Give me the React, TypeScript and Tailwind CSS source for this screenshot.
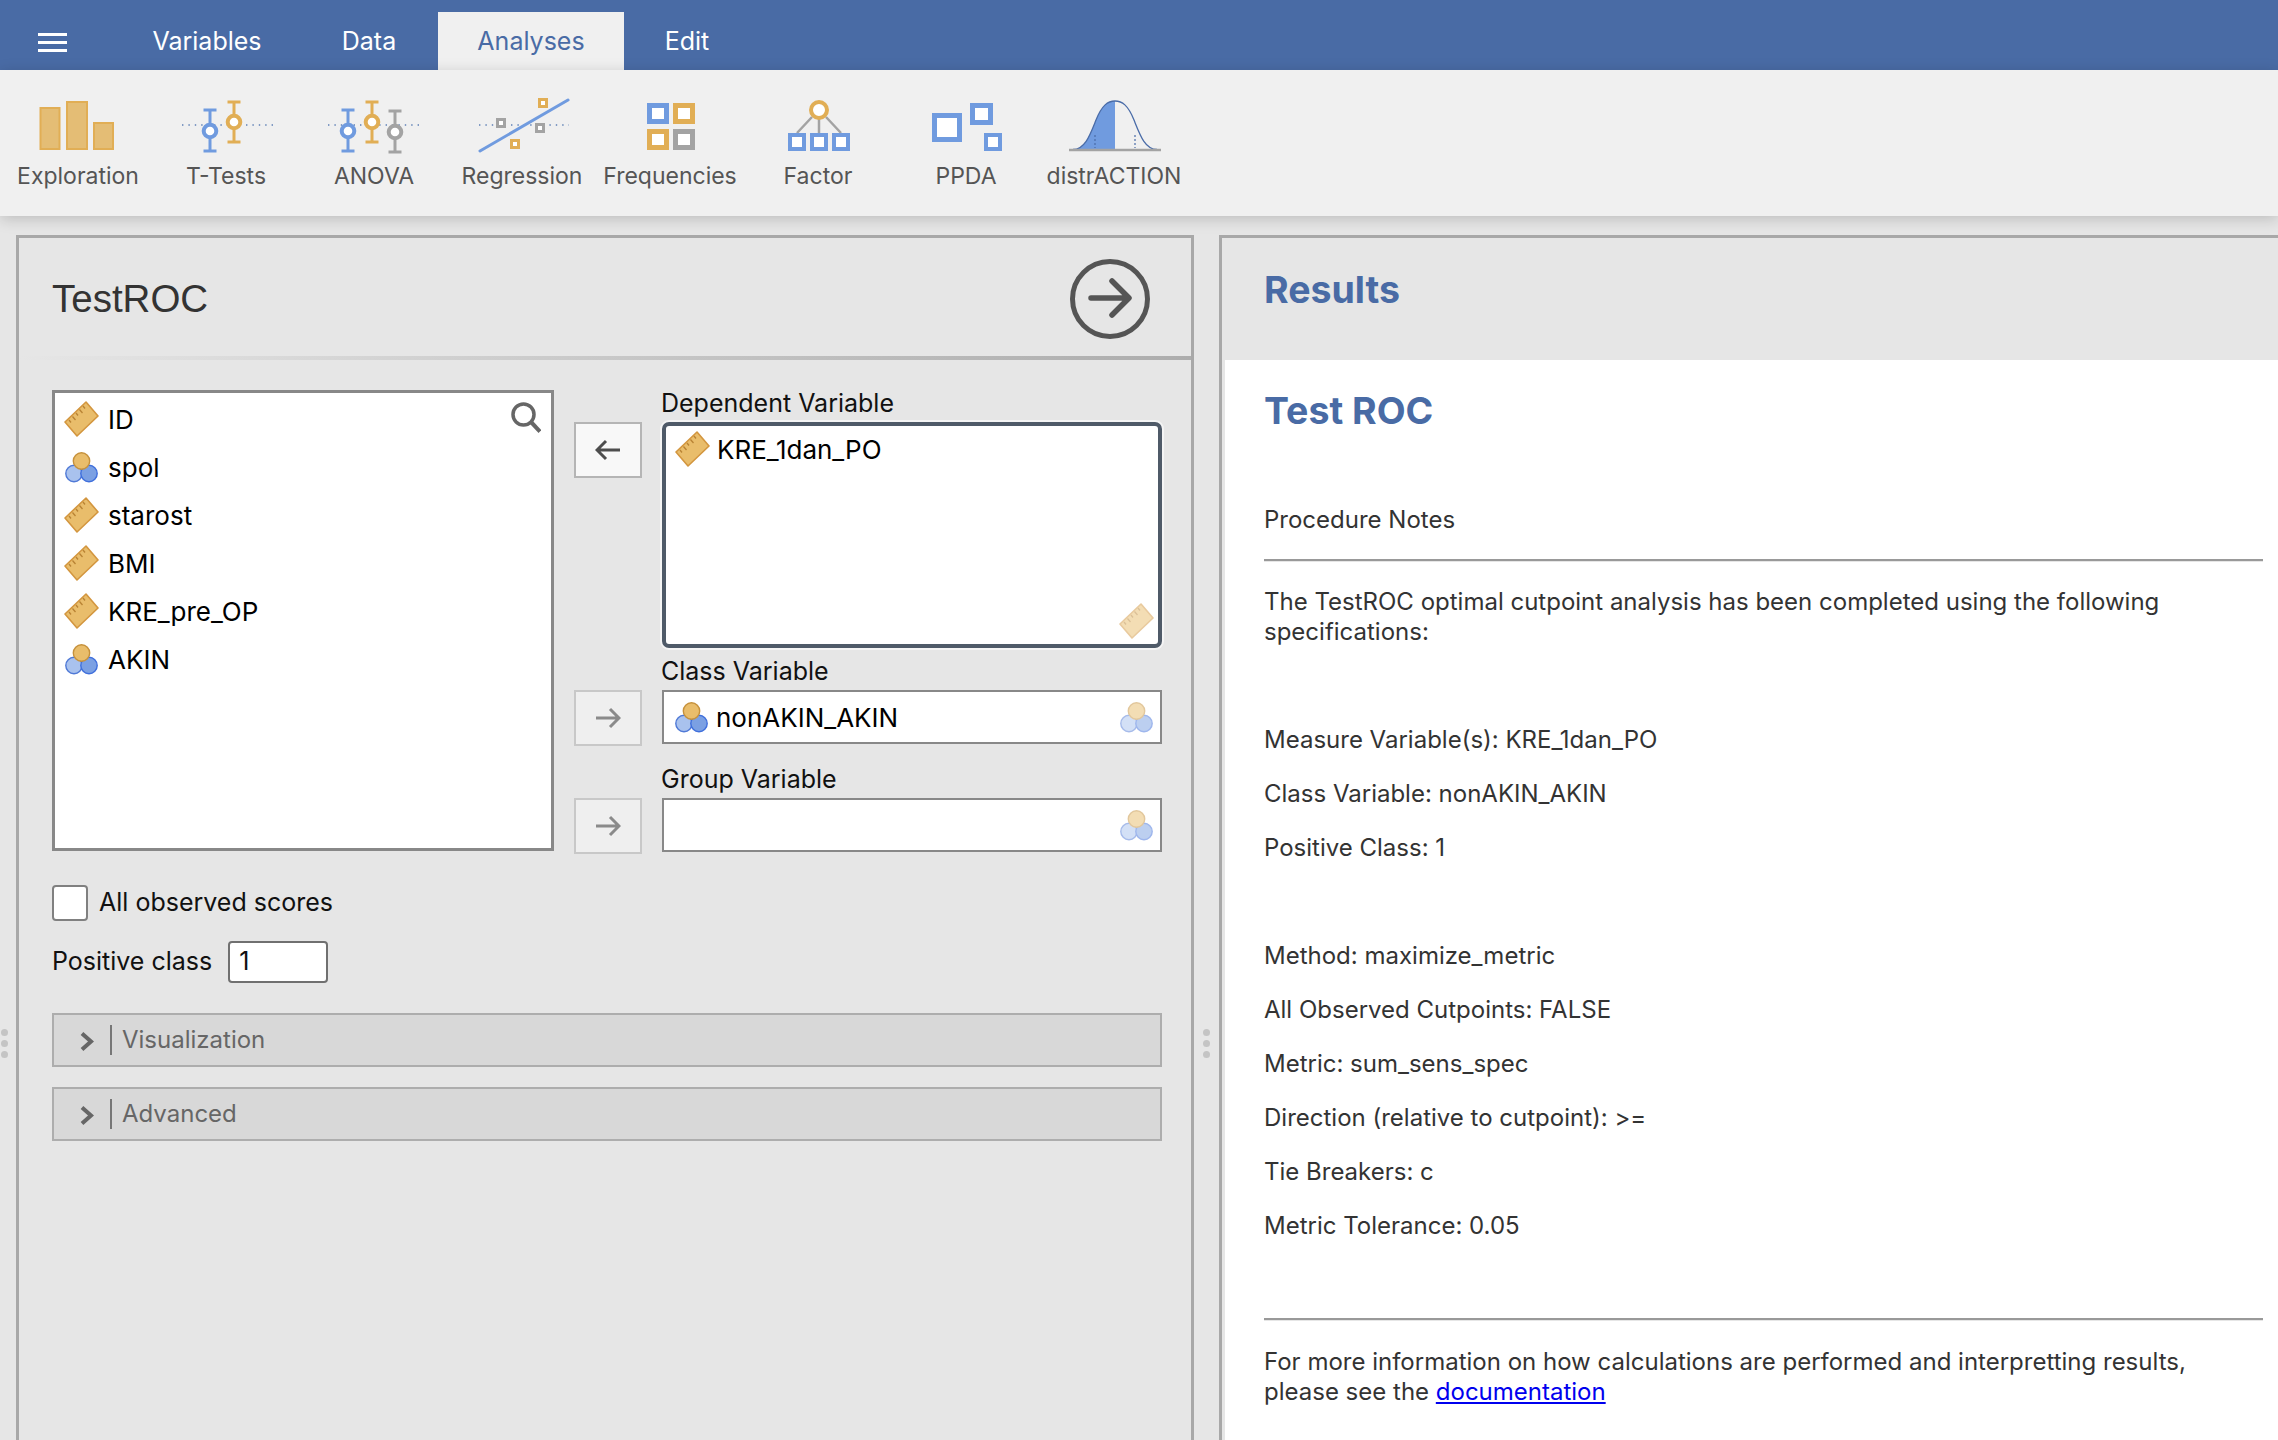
import type { ReactNode } from "react";

const ORANGE = "#e1ae55";
const BLUE = "#709bdf";
const GRAY = "#a3a3a3";

function RulerIcon({ faded = false }: { faded?: boolean }) {
  return (
    <svg width="35" height="36" viewBox="0 0 35 36" className={faded ? "opacity-50" : ""}>
      <path d="M22 1 L34 15 L13 35 L1 21 Z" fill="#e9bd6b" stroke="#d3963f" strokeWidth="1.6" strokeLinejoin="round" />
      <path
        d="M19 5 L21 7.5 M15.5 8.5 L18.5 12 M12 12 L14 14.5 M8.5 15.5 L11.5 19 M5 19 L7 21.5"
        stroke="#b98334"
        strokeWidth="1.3"
        fill="none"
      />
    </svg>
  );
}

function NominalIcon({ faded = false }: { faded?: boolean }) {
  return (
    <svg width="33" height="31" viewBox="0 0 33 31" className={faded ? "opacity-50" : ""}>
      <circle cx="9" cy="21.5" r="8.2" fill="#a9c2ee" stroke="#4f79d6" strokeWidth="1.4" />
      <circle cx="24" cy="21.5" r="8.2" fill="#7ba0e3" stroke="#3f6fdc" strokeWidth="1.4" />
      <circle cx="16.5" cy="9" r="8.2" fill="#e9bd6b" stroke="#c6913c" strokeWidth="1.4" />
    </svg>
  );
}

function ErrorBar({ x, top, bottom, cy, color }: { x: number; top: number; bottom: number; cy: number; color: string }) {
  return (
    <g stroke={color} fill="none">
      <path d={`M${x - 6.5} ${top} H${x + 6.5} M${x} ${top} V${bottom} M${x - 6.5} ${bottom} H${x + 6.5}`} strokeWidth="3" />
      <circle cx={x} cy={cy} r="6.3" fill="#fff" strokeWidth="4" />
    </g>
  );
}

function Box({ x, y, w, h, color, s = 5 }: { x: number; y: number; w: number; h: number; color: string; s?: number }) {
  return <rect x={x + s / 2} y={y + s / 2} width={w - s} height={h - s} fill="#fff" stroke={color} strokeWidth={s} />;
}

function Dots({ from, to }: { from: number; to: number }) {
  return <path d={`M${from} 30 H${to}`} stroke="#5d7fb5" strokeWidth="1.3" strokeDasharray="1.4 5" fill="none" />;
}

const tools: { label: string; icon: ReactNode }[] = [
  {
    label: "Exploration",
    icon: (
      <g fill="#e4bd75" stroke={ORANGE} strokeWidth="2">
        <rect x="36.5" y="13" width="19" height="41" />
        <rect x="63" y="7" width="20" height="47" />
        <rect x="90" y="28" width="19" height="26" />
      </g>
    ),
  },
  {
    label: "T-Tests",
    icon: (
      <>
        <Dots from={30} to={121} />
        <ErrorBar x={58} top={15} bottom={56} cy={36} color={BLUE} />
        <ErrorBar x={82} top={7} bottom={47} cy={27} color={ORANGE} />
      </>
    ),
  },
  {
    label: "ANOVA",
    icon: (
      <>
        <Dots from={28} to={119} />
        <ErrorBar x={48} top={15} bottom={56} cy={36} color={BLUE} />
        <ErrorBar x={72} top={7} bottom={47} cy={27} color={ORANGE} />
        <ErrorBar x={95} top={16} bottom={57} cy={37} color={GRAY} />
      </>
    ),
  },
  {
    label: "Regression",
    icon: (
      <>
        <Dots from={31} to={121} />
        <path d="M32 56 L120 5" stroke={BLUE} strokeWidth="3" strokeLinecap="round" />
        <Box x={90} y={3} w={10} h={10} color={ORANGE} s={3} />
        <Box x={48} y={23} w={10} h={10} color={GRAY} s={3} />
        <Box x={87} y={28} w={10} h={10} color={GRAY} s={3} />
        <Box x={62} y={44} w={10} h={10} color={ORANGE} s={3} />
      </>
    ),
  },
  {
    label: "Frequencies",
    icon: (
      <>
        <Box x={51} y={8} w={22} h={21} color={BLUE} />
        <Box x={77} y={8} w={22} h={21} color={ORANGE} />
        <Box x={51} y={34} w={22} h={21} color={ORANGE} />
        <Box x={77} y={34} w={22} h={21} color={GRAY} />
      </>
    ),
  },
  {
    label: "Factor",
    icon: (
      <>
        <path d="M68 22 L53 38 M75 24 V38 M82 22 L97 38" stroke={GRAY} strokeWidth="2.5" />
        <circle cx="75" cy="15" r="8" fill="#fff" stroke={ORANGE} strokeWidth="4" />
        <Box x={44} y={38} w={18} h={18} color={BLUE} s={4} />
        <Box x={66} y={38} w={18} h={18} color={BLUE} s={4} />
        <Box x={88} y={38} w={18} h={18} color={BLUE} s={4} />
      </>
    ),
  },
  {
    label: "PPDA",
    icon: (
      <>
        <Box x={40} y={18} w={30} h={29} color={BLUE} />
        <Box x={78} y={8} w={23} h={22} color={BLUE} />
        <Box x={92} y={38} w={18} h={18} color={BLUE} s={4} />
      </>
    ),
  },
  {
    label: "distrACTION",
    icon: (
      <>
        <path d="M33 54.5 C45 54.5 50 40 56 25 C62 10 68 6 75 6 L75 54.5 Z" fill={BLUE} />
        <path
          d="M33 54.5 C45 54.5 50 40 56 25 C62 10 68 6 75 6 C82 6 88 10 94 25 C100 40 105 54.5 117 54.5"
          fill="none"
          stroke="#4a6ca8"
          strokeWidth="1.3"
        />
        <path d="M55 40 V53 M95 40 V53" stroke="#4a6ca8" strokeWidth="1.2" strokeDasharray="2 2" />
        <path d="M29 55 H121" stroke={GRAY} strokeWidth="2.5" />
      </>
    ),
  },
];

function VariableRow({ name, kind }: { name: string; kind: "ruler" | "nominal" }) {
  return (
    <div className="flex h-[48px] items-center">
      <div className="flex w-[53px] shrink-0 justify-center">{kind === "ruler" ? <RulerIcon /> : <NominalIcon />}</div>
      <span className="text-[26px] text-black">{name}</span>
    </div>
  );
}

function ArrowButton({ dir, active = false }: { dir: "left" | "right"; active?: boolean }) {
  return (
    <div
      className={`flex h-[56px] w-[68px] shrink-0 items-center justify-center border-[2px] ${
        active ? "border-[#b5b5b5] bg-[#f8f8f8]" : "border-[#c8c8c8] bg-[#efefef]"
      }`}
    >
      <svg width="26" height="22" viewBox="0 0 26 22" fill="none">
        <path
          d={dir === "left" ? "M25 11 H2 M11 2 L2 11 L11 20" : "M1 11 H24 M15 2 L24 11 L15 20"}
          stroke={active ? "#4d4d4d" : "#8a8a8a"}
          strokeWidth="3"
        />
      </svg>
    </div>
  );
}

function SectionBar({ title }: { title: string }) {
  return (
    <div className="flex h-[54px] items-center border-[2.5px] border-[#adadad] bg-[#d8d8d8]">
      <div className="flex w-[56px] justify-center pl-[9px]">
        <svg width="15" height="21" viewBox="0 0 15 21" fill="none" className="mt-[4px]">
          <path d="M3 2.5 L12 10.5 L3 18.5" stroke="#666" strokeWidth="4" />
        </svg>
      </div>
      <div className="h-[30px] w-[2px] bg-[#777]" />
      <span className="ml-[10px] text-[24px] text-[#666]">{title}</span>
    </div>
  );
}

function Line({ children }: { children: ReactNode }) {
  return <p className="text-[24px] leading-[30px] text-[#333]">{children}</p>;
}

function Rule() {
  return <div className="h-[3px] border-b border-[#e6e6e6] bg-[#999]" />;
}

function GripDots() {
  return (
    <div className="flex flex-col gap-[4px]">
      <div className="h-[7px] w-[7px] rounded-full bg-[#c4c4c4]" />
      <div className="h-[7px] w-[7px] rounded-full bg-[#c4c4c4]" />
      <div className="h-[7px] w-[7px] rounded-full bg-[#c4c4c4]" />
    </div>
  );
}

export default function App() {
  return (
    <div className="flex h-[1440px] w-[2278px] flex-col overflow-hidden bg-[#e6e6e6] font-['Inter',sans-serif]">
      {/* tab bar */}
      <div className="flex h-[70px] shrink-0 items-end bg-[#496ba5] text-[25px] text-white">
        <div className="flex h-[58px] w-[104px] items-center justify-center pt-[3px]">
          <div className="flex w-[29px] flex-col gap-[5px]">
            <div className="h-[3px] bg-white" />
            <div className="h-[3px] bg-white" />
            <div className="h-[3px] bg-white" />
          </div>
        </div>
        <div className="flex h-[58px] w-[206px] items-center justify-center pt-[2px]">Variables</div>
        <div className="mr-[10px] flex h-[58px] w-[118px] items-center justify-center pt-[2px]">Data</div>
        <div className="flex h-[58px] w-[186px] items-center justify-center bg-[#f0f0f0] pt-[2px] text-[#496ba5]">Analyses</div>
        <div className="flex h-[58px] w-[126px] items-center justify-center pt-[2px]">Edit</div>
      </div>

      {/* analyses ribbon */}
      <div className="z-10 flex h-[146px] shrink-0 bg-[#f0f0f0] pl-[4px] shadow-[0_3px_14px_rgba(0,0,0,0.18)]">
        {tools.map((tool) => (
          <div key={tool.label} className="flex w-[148px] flex-col items-center pt-[25px]">
            <svg width="148" height="60" viewBox="0 0 148 60">
              {tool.icon}
            </svg>
            <span className="mt-[7px] whitespace-nowrap text-[23px] leading-[28px] text-[#555]">{tool.label}</span>
          </div>
        ))}
      </div>

      <div className="flex min-h-0 flex-1 pt-[19px]">
        <div className="flex w-[16px] shrink-0 justify-start pl-[1px] pt-[794px]">
          <GripDots />
        </div>

        {/* options panel */}
        <div className="w-[1178px] shrink-0 border-x-[3px] border-t-[3px] border-[#a8a8a8]">
          <div className="flex h-[118px] items-center justify-between pl-[33px] pr-[41px] pt-[3px]">
            <h1 className="font-['Liberation_Sans',sans-serif] text-[38.5px] text-[#333]">TestROC</h1>
            <svg width="80" height="80" viewBox="0 0 80 80" fill="none">
              <circle cx="40" cy="40" r="37.5" stroke="#555" strokeWidth="5" />
              <path d="M21 39 H58 M42 22 L59 39 L42 56" stroke="#555" strokeWidth="5.5" strokeLinecap="round" strokeLinejoin="round" />
            </svg>
          </div>
          <div className="h-[4px] bg-linear-to-r from-[#e6e6e6] via-[#c8c8c8] to-[#adadad]" />

          <div className="pl-[33px] pr-[29px] pt-[30px]">
            <div className="flex">
              <div className="relative h-[461px] w-[502px] shrink-0 border-[3px] border-[#888] bg-white pt-[2px]">
                <VariableRow name="ID" kind="ruler" />
                <VariableRow name="spol" kind="nominal" />
                <VariableRow name="starost" kind="ruler" />
                <VariableRow name="BMI" kind="ruler" />
                <VariableRow name="KRE_pre_OP" kind="ruler" />
                <VariableRow name="AKIN" kind="nominal" />
                <svg width="30" height="31" viewBox="0 0 30 31" fill="none" className="absolute right-[10px] top-[9px]">
                  <circle cx="12.5" cy="12.5" r="10.5" stroke="#666" strokeWidth="3.5" />
                  <path d="M20 20 L29 29.5" stroke="#666" strokeWidth="4" />
                </svg>
              </div>

              <div className="ml-[20px] flex-1">
                <div className="ml-[87px] flex h-[32px] items-end pb-[6px] text-[25px] leading-none text-[#111]">Dependent Variable</div>
                <div className="flex gap-[20px]">
                  <ArrowButton dir="left" active />
                  <div className="flex h-[226px] w-[500px] items-start justify-between rounded-[7px] border-[4px] border-[#4f5a68] bg-white pl-[9px] pr-[4px] shadow-[0_0_0_2px_#f4f4f4]">
                    <div className="flex h-[46px] items-center">
                      <RulerIcon />
                      <span className="ml-[7px] text-[26px] text-black">KRE_1dan_PO</span>
                    </div>
                    <div className="self-end pb-[5px]">
                      <RulerIcon faded />
                    </div>
                  </div>
                </div>

                <div className="ml-[87px] flex h-[42px] items-end pb-[6px] text-[25px] leading-none text-[#111]">Class Variable</div>
                <div className="flex gap-[20px]">
                  <ArrowButton dir="right" />
                  <div className="flex h-[54px] w-[500px] items-center justify-between border-[2.5px] border-[#888] bg-white pl-[11px] pr-[7px]">
                    <div className="flex items-center">
                      <NominalIcon />
                      <span className="ml-[8px] text-[26px] text-black">nonAKIN_AKIN</span>
                    </div>
                    <NominalIcon faded />
                  </div>
                </div>

                <div className="ml-[87px] flex h-[52px] items-end pb-[6px] text-[25px] leading-none text-[#111]">Group Variable</div>
                <div className="flex gap-[20px]">
                  <ArrowButton dir="right" />
                  <div className="flex h-[54px] w-[500px] items-center justify-end border-[2.5px] border-[#888] bg-white pr-[7px]">
                    <NominalIcon faded />
                  </div>
                </div>
              </div>
            </div>

            <div className="mt-[30px] flex items-center">
              <div className="h-[36px] w-[36px] rounded-[4px] border-[2px] border-[#808080] bg-white" />
              <span className="ml-[11px] text-[25px] text-[#111]">All observed scores</span>
            </div>

            <div className="mt-[19px] flex items-center">
              <span className="text-[25px] text-[#111]">Positive class</span>
              <div className="ml-[16px] flex h-[42px] w-[100px] items-center rounded-[4px] border-[2px] border-[#707070] bg-white pl-[9px] text-[25px] text-[#111]">
                1
              </div>
            </div>

            <div className="mt-[30px] flex flex-col gap-[20px]">
              <SectionBar title="Visualization" />
              <SectionBar title="Advanced" />
            </div>
          </div>
        </div>

        <div className="flex w-[25px] shrink-0 justify-center pt-[794px]">
          <GripDots />
        </div>

        {/* results panel */}
        <div className="flex min-w-0 flex-1 flex-col border-l-[3px] border-t-[3px] border-[#a8a8a8]">
          <div className="flex h-[122px] shrink-0 items-start pl-[42px] pt-[30px]">
            <h2 className="text-[37.5px] font-bold leading-[44px] text-[#496ba5]">Results</h2>
          </div>
          <div className="ml-[3px] flex-1 bg-white pl-[39px] pr-[15px] pt-[29px]">
            <h3 className="text-[37.5px] font-bold leading-[44px] text-[#496ba5]">Test ROC</h3>
            <div className="mt-[72px]">
              <Line>Procedure Notes</Line>
            </div>
            <div className="mt-[24px]">
              <Rule />
            </div>
            <div className="mt-[25px]">
              <Line>
                The TestROC optimal cutpoint analysis has been completed using the following
                <br />
                specifications:
              </Line>
            </div>
            <div className="mt-[78px] flex flex-col gap-[24px]">
              <Line>Measure Variable(s): KRE_1dan_PO</Line>
              <Line>Class Variable: nonAKIN_AKIN</Line>
              <Line>Positive Class: 1</Line>
            </div>
            <div className="mt-[78px] flex flex-col gap-[24px]">
              <Line>Method: maximize_metric</Line>
              <Line>All Observed Cutpoints: FALSE</Line>
              <Line>Metric: sum_sens_spec</Line>
              <Line>Direction (relative to cutpoint): &gt;=</Line>
              <Line>Tie Breakers: c</Line>
              <Line>Metric Tolerance: 0.05</Line>
            </div>
            <div className="mt-[77px]">
              <Rule />
            </div>
            <div className="mt-[26px]">
              <Line>
                For more information on how calculations are performed and interpretting results,
                <br />
                please see the <span className="text-[#0000ee] underline">documentation</span>
              </Line>
            </div>
          </div>
        </div>
      </div>
    </div>
  );
}
